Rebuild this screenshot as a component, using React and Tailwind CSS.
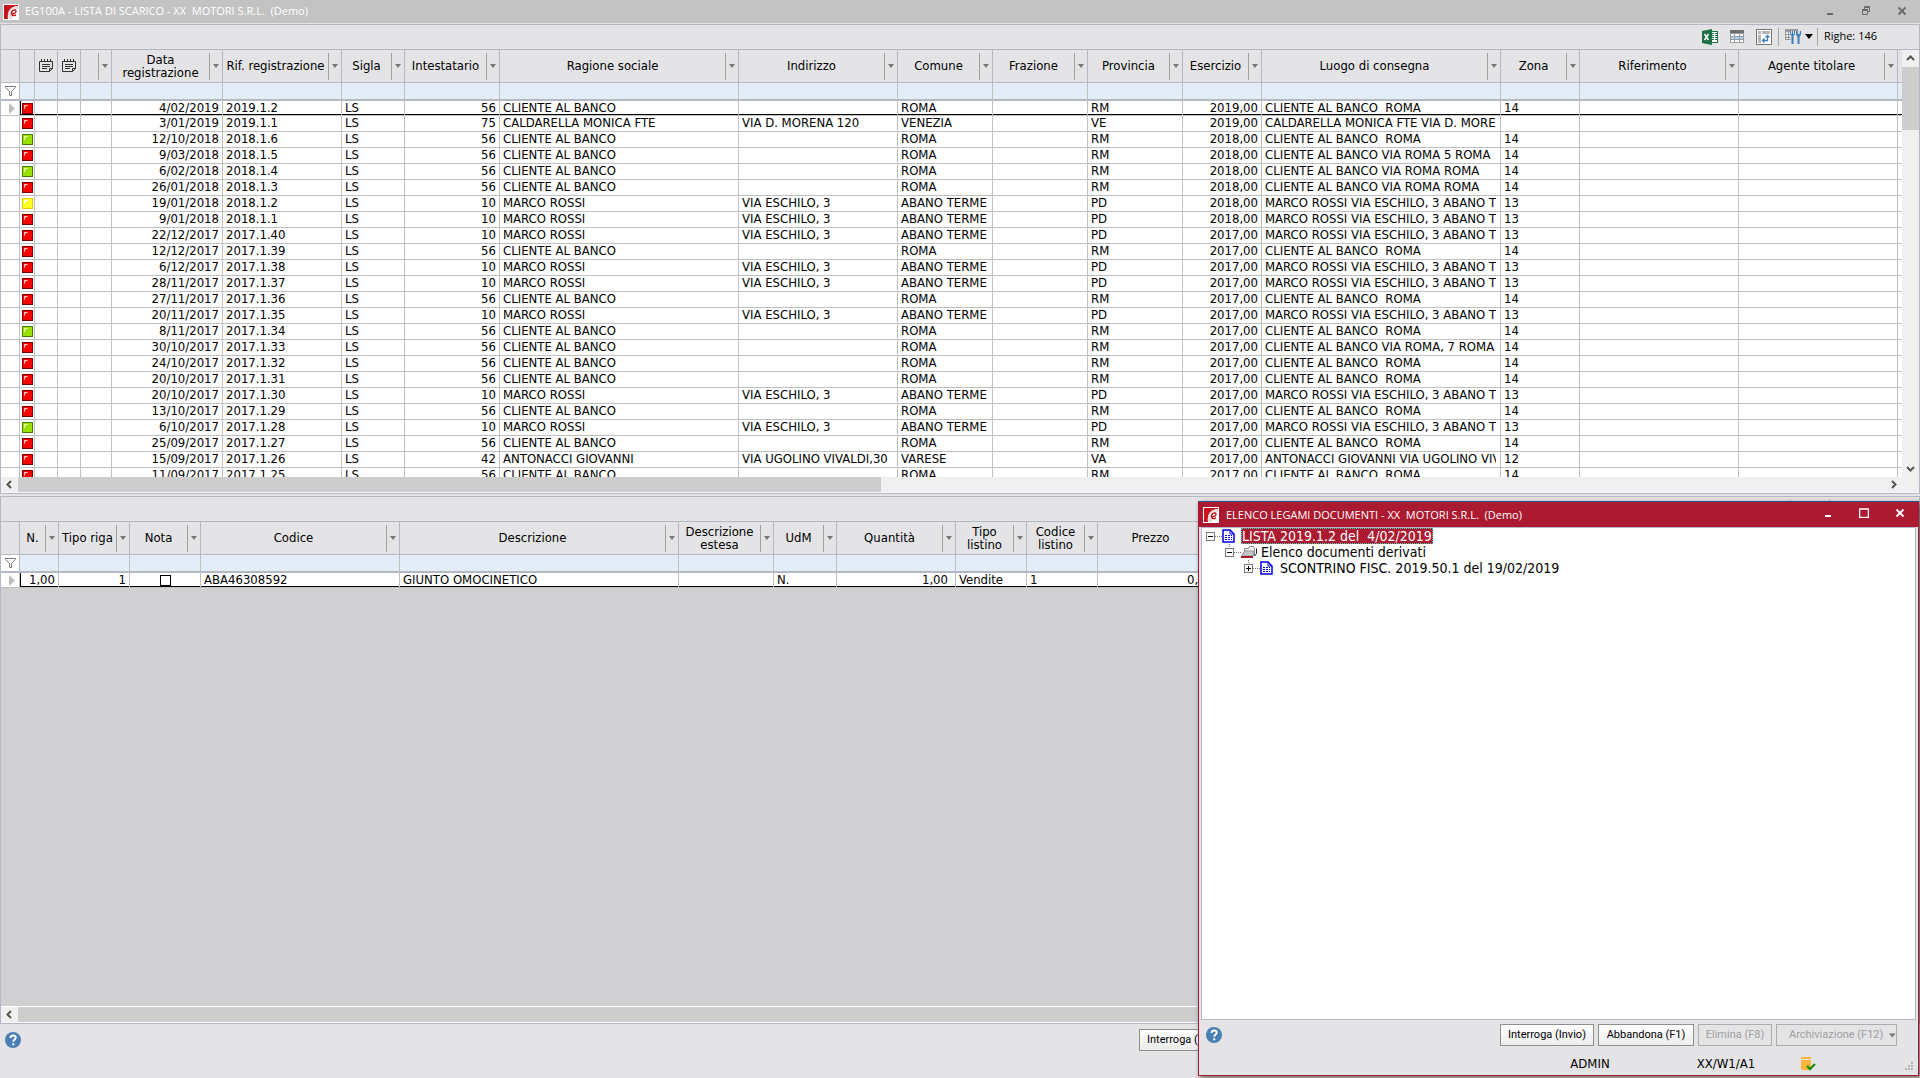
import React from 'react';
import clsx from 'clsx';

const docColumns = [
  { width: 15 },
  { width: 23, icon: true },
  { width: 23, icon: true },
  { width: 31, menu: true },
  { label: 'Data registrazione', width: 111, menu: true, right: true },
  { label: 'Rif. registrazione', width: 119, menu: true },
  { label: 'Sigla', width: 63, menu: true },
  { label: 'Intestatario', width: 95, menu: true, right: true },
  { label: 'Ragione sociale', width: 239, menu: true },
  { label: 'Indirizzo', width: 159, menu: true },
  { label: 'Comune', width: 95, menu: true },
  { label: 'Frazione', width: 95, menu: true },
  { label: 'Provincia', width: 95, menu: true },
  { label: 'Esercizio', width: 79, menu: true, right: true },
  { label: 'Luogo di consegna', width: 239, menu: true },
  { label: 'Zona', width: 79, menu: true },
  { label: 'Riferimento', width: 159, menu: true },
  { label: 'Agente titolare', width: 159, menu: true },
];

const lineColumns = [
  { label: 'N.', width: 39, menu: true, right: true },
  { label: 'Tipo riga', width: 71, menu: true, right: true },
  { label: 'Nota', width: 71, menu: true },
  { label: 'Codice', width: 199, menu: true },
  { label: 'Descrizione', width: 279, menu: true },
  { label: 'Descrizione estesa', width: 95, menu: true },
  { label: 'UdM', width: 63, menu: true },
  { label: 'Quantità', width: 119, menu: true, right: true, wide: true },
  { label: 'Tipo listino', width: 71, menu: true },
  { label: 'Codice listino', width: 71, menu: true },
  { label: 'Prezzo', width: 119, menu: true, right: true },
];

const customers = {
  banco: ['56', 'CLIENTE AL BANCO', '', 'ROMA', 'RM', '14', 'CLIENTE AL BANCO  ROMA'],
  rossi: ['10', 'MARCO ROSSI', 'VIA ESCHILO, 3', 'ABANO TERME', 'PD', '13', 'MARCO ROSSI VIA ESCHILO, 3 ABANO TERME'],
  caldarella: ['75', 'CALDARELLA MONICA FTE', 'VIA D. MORENA 120', 'VENEZIA', 'VE', '', 'CALDARELLA MONICA FTE VIA D. MORENA 120'],
  antonacci: ['42', 'ANTONACCI GIOVANNI', 'VIA UGOLINO VIVALDI,30', 'VARESE', 'VA', '12', 'ANTONACCI GIOVANNI VIA UGOLINO VIVALDI,30'],
};

// state, date, reference, customer, delivery place when it is not the default one
const docs = [
  ['red', '4/02/2019', '2019.1.2', 'banco'],
  ['red', '3/01/2019', '2019.1.1', 'caldarella'],
  ['green', '12/10/2018', '2018.1.6', 'banco'],
  ['red', '9/03/2018', '2018.1.5', 'banco', 'CLIENTE AL BANCO VIA ROMA 5 ROMA'],
  ['green', '6/02/2018', '2018.1.4', 'banco', 'CLIENTE AL BANCO VIA ROMA ROMA'],
  ['red', '26/01/2018', '2018.1.3', 'banco', 'CLIENTE AL BANCO VIA ROMA ROMA'],
  ['yellow', '19/01/2018', '2018.1.2', 'rossi'],
  ['red', '9/01/2018', '2018.1.1', 'rossi'],
  ['red', '22/12/2017', '2017.1.40', 'rossi'],
  ['red', '12/12/2017', '2017.1.39', 'banco'],
  ['red', '6/12/2017', '2017.1.38', 'rossi'],
  ['red', '28/11/2017', '2017.1.37', 'rossi'],
  ['red', '27/11/2017', '2017.1.36', 'banco'],
  ['red', '20/11/2017', '2017.1.35', 'rossi'],
  ['green', '8/11/2017', '2017.1.34', 'banco'],
  ['red', '30/10/2017', '2017.1.33', 'banco', 'CLIENTE AL BANCO VIA ROMA, 7 ROMA'],
  ['red', '24/10/2017', '2017.1.32', 'banco'],
  ['red', '20/10/2017', '2017.1.31', 'banco'],
  ['red', '20/10/2017', '2017.1.30', 'rossi'],
  ['red', '13/10/2017', '2017.1.29', 'banco'],
  ['green', '6/10/2017', '2017.1.28', 'rossi'],
  ['red', '25/09/2017', '2017.1.27', 'banco'],
  ['red', '15/09/2017', '2017.1.26', 'antonacci'],
  ['red', '11/09/2017', '2017.1.25', 'banco'],
];

const stateColors = {
  red: ['#ff0000', '#7d0000', '#ffb0b0'],
  green: ['#99e000', '#4b7a00', '#e0ff9a'],
  yellow: ['#ffff1a', '#e3cf00', '#ffffff'],
};

function StateIcon({ state }) {
  const [fill, edge, shine] = stateColors[state];
  return (
    <svg width="11" height="11" viewBox="0 0 11 11" className="mx-auto block" role="img" aria-label={state}>
      <rect x="0.5" y="0.5" width="10" height="10" fill={fill} stroke={edge} />
      <path d="M2 2h4v1H4v1H3v2H2z" fill={shine} />
    </svg>
  );
}

function NoteIcon() {
  return (
    <svg width="14" height="14" viewBox="0 0 14 14" className="mx-auto block" fill="none" stroke="#333">
      <path d="M0.5 2.5h13v7l-3 3h-10z" />
      <path d="M2.5 0v3M5.5 0v3M8.5 0v3M11.5 0v3M3 5.5h8M3 7.5h8M3 9.5h5M10.5 12.5v-3h3" />
    </svg>
  );
}

function FunnelIcon() {
  return (
    <svg width="11" height="10" viewBox="0 0 11 10" className="ml-1 block" fill="none" stroke="#777">
      <path d="M0.5 0.5h10v1l-4 4v4h-2v-4l-4-4z" />
    </svg>
  );
}

function RowMarker() {
  return (
    <svg width="6" height="11" viewBox="0 0 6 11" className="ml-2 block">
      <path d="M0 0l6 5.5L0 11z" fill="#bdbdbd" />
    </svg>
  );
}

function AppLogo() {
  return (
    <svg width="16" height="16" viewBox="0 0 16 16" className="shrink-0">
      <rect width="16" height="16" fill="#fff" />
      <path d="M1 1h14v1C8 2 4 7 5 15H1z" fill="#c4161c" />
      <path d="M15 2C8 2 4 7 5 15h2C6 8 9 4 15 4z" fill="#f3dada" />
      <path d="M15 4C9 4 6 8 7 15h8z" fill="#d9d9d9" />
      <path d="M15 5C10 5 8 9 9 15h6z" fill="#fff" />
      <path d="M8 10c3 0 5.500-1.300 5-3s-3.800-1-4.500 1.500c-.7 2.800 1.500 4 4.500 2.500" fill="none" stroke="#c4161c" strokeWidth="1.400" />
    </svg>
  );
}

function HelpButton({ className }) {
  return (
    <button type="button" aria-label="Aiuto" className={clsx('block size-4 shrink-0', className)}>
      <svg width="16" height="16" viewBox="0 0 16 16">
        <circle cx="8" cy="8" r="8" fill="#4a7fb5" />
        <path d="M5.500 6c0-1.800 1.100-2.600 2.600-2.600s2.600.8 2.600 2.300c0 1.900-2.400 1.900-2.400 4" fill="none" stroke="#fff" strokeWidth="2" />
        <path d="M7.200 11.300h2.100v2H7.200z" fill="#fff" />
      </svg>
    </button>
  );
}

function Toolbar({ count }) {
  return (
    <div className="flex h-[25px] shrink-0 items-center justify-end border-b border-[#b4b8c4] pr-[42px] pb-px">
      <button type="button" aria-label="Esporta in Excel">
        <svg width="16" height="16" viewBox="0 0 16 16" className="block">
          <rect x="8.500" y="2.500" width="7" height="11" fill="#fff" stroke="#1f7145" />
          <path d="M10 4.500h2M13 4.500h2M10 6.500h2M13 6.500h2M10 8.500h2M13 8.500h2M10 10.500h2M13 10.500h2" stroke="#1f7145" />
          <path d="M0 2l10-2v16L0 14z" fill="#1f7145" />
          <path d="M2.500 5l4 6M6.500 5l-4 6" stroke="#fff" strokeWidth="1.500" />
        </svg>
      </button>
      <button type="button" aria-label="Griglia" className="ml-3">
        <svg width="14" height="14" viewBox="0 0 14 14" className="block">
          <rect width="14" height="13" fill="#9c9c9c" />
          <rect width="14" height="3" fill="#6e6e6e" />
          <path d="M1 4h3v2H1zM5 4h4v2H5zM10 4h3v2h-3zM1 10h3v2H1zM5 10h4v2H5zM10 10h3v2h-3z" fill="#fff" />
          <path d="M1 7h3v2H1zM5 7h4v2H5zM10 7h3v2h-3z" fill="#a9d4f2" />
        </svg>
      </button>
      <button type="button" aria-label="Pivot" className="ml-3">
        <svg width="16" height="16" viewBox="0 0 16 16" className="block">
          <rect x="0.500" y="0.500" width="15" height="15" fill="#fff" stroke="#777" />
          <path d="M2 2h3v3H2zM6 2h8v3H6zM2 6h3v8H2z" fill="#b5b5b5" />
          <path d="M11.500 7v4.500H7M9.500 8.500l2-2 2 2M8.500 9.500l-2 2 2 2" fill="none" stroke="#3d7dbb" strokeWidth="1.300" />
        </svg>
      </button>
      <span className="ml-1.5 h-[18px] w-px bg-[#a8a8a8]" />
      <button type="button" aria-label="Impostazioni griglia" className="ml-1.5 flex items-center gap-1">
        <svg width="16" height="15" viewBox="0 0 16 15" className="block">
          <path d="M0 0h13v11H0z" fill="#9b9b9b" />
          <path d="M1 3h2v2H1zM4 3h2v2H4zM1 6h2v2H1zM4 6h2v2H4zM1 9h2v1H1zM4 9h2v1H4z" fill="#e8e8e8" />
          <path d="M5 2h7v3h4v3h-3v7H6z" fill="#e4e4e6" />
          <path d="M5 2v3l1.500 2v8h2V7L10 5V2H9v3H8V2H7v3H6V2zM11 2v3.500L12.500 8v7h2V8L16 5.500V2h-1.200v3h-2.600V2z" fill="#3d7dbb" />
        </svg>
        <svg width="8" height="5" viewBox="0 0 8 5" className="block">
          <path d="M0 0h8L4 5z" fill="#000" />
        </svg>
      </button>
      <span className="ml-1 h-[18px] w-px bg-[#a8a8a8]" />
      <span className="ml-1.5 font-['Open_Sans',sans-serif] text-[11px]">Righe: {count}</span>
    </div>
  );
}

function GridHead({ columns }) {
  return (
    <thead>
      <tr className="bg-[#e4e4e6]">
        <th className="h-[33px] border-r border-b border-[#b4b8c4] p-0" />
        {columns.map((col, i) => (
          <th key={i} className="h-[33px] border-r border-b border-[#b4b8c4] p-0 font-normal">
            <div className="flex h-8 items-center">
              <span className="min-w-0 flex-1 pb-px text-center leading-[13px]">
                {col.icon ? <NoteIcon /> : col.label}
              </span>
              {col.menu && (
                <button
                  type="button"
                  aria-label={`Menu ${col.label || 'colonna'}`}
                  className="flex h-[27px] w-[13px] shrink-0 items-center justify-center border-l border-[#a0a0a0]"
                >
                  <svg width="6" height="4" viewBox="0 0 6 4">
                    <path d="M0 0h6L3 4z" fill="#777" />
                  </svg>
                </button>
              )}
            </div>
          </th>
        ))}
        <th className="border-b border-[#b4b8c4] p-0" />
      </tr>
      <tr className="bg-[#e3edf7]">
        <td className="h-[18px] border-r border-b-2 border-[#b4b8c4] bg-white p-0">
          <FunnelIcon />
        </td>
        {columns.map((col, i) => (
          <td key={i} className="h-[18px] border-r border-b-2 border-r-[#c0c0c0] border-b-[#b4b8c4] p-0">
            <input
              type="text"
              aria-label={`Filtro ${col.label || 'colonna'}`}
              className="block h-4 w-full bg-transparent px-[3px] outline-none"
            />
          </td>
        ))}
        <td className="border-b-2 border-[#b4b8c4] p-0" />
      </tr>
    </thead>
  );
}

function Grid({ columns, rows }) {
  return (
    <table className="w-full table-fixed border-separate border-spacing-0 leading-[13px]">
      <colgroup>
        <col style={{ width: 19 }} />
        {columns.map((col, i) => (
          <col key={i} style={{ width: col.width }} />
        ))}
        <col />
      </colgroup>
      <GridHead columns={columns} />
      <tbody className="bg-white">
        {rows.map((cells, r) => {
          const active = r === 0;
          const line = active ? 'shadow-[inset_0_-1px_0_#000]' : '';
          return (
            <tr key={r}>
              <td className={clsx('border-r border-b border-[#c0c0c0] p-0', active ? 'h-[15px]' : 'h-4')}>
                {active && <RowMarker />}
              </td>
              {cells.map((cell, i) => (
                <td
                  key={i}
                  className={clsx(
                    'border-r border-b border-[#c0c0c0] p-0',
                    active && i === 0 ? 'shadow-[inset_1px_-1px_0_#000]' : line,
                  )}
                >
                  <div
                    className={clsx(
                      'overflow-hidden whitespace-pre',
                      active ? 'h-3.5' : 'h-[15px]',
                      typeof cell !== 'string' && 'flex items-center',
                      typeof cell === 'string' && (columns[i].right ? 'text-right' : 'mr-1 ml-[3px]'),
                      columns[i].right && (columns[i].wide ? 'mr-[7px]' : 'mr-[3px]'),
                    )}
                  >
                    {cell}
                  </div>
                </td>
              ))}
              <td className={clsx('border-b border-[#c0c0c0] p-0', line)} />
            </tr>
          );
        })}
      </tbody>
    </table>
  );
}

function Chevron({ d }) {
  return (
    <svg width="9" height="9" viewBox="0 0 9 9" fill="none" stroke="#555" strokeWidth="2">
      <path d={d} />
    </svg>
  );
}

function HScroll({ thumb }) {
  return (
    <div className="flex h-4 shrink-0 items-stretch border-b border-[#f8f8f8] bg-[#f0f0f0]">
      <button type="button" aria-label="Scorri a sinistra" className="flex w-[17px] items-center justify-center">
        <Chevron d="M6 1L2.500 4.500 6 8" />
      </button>
      <div className="flex flex-1">
        <div className={clsx('bg-[#cdcdcd]', thumb)} />
      </div>
      <button type="button" aria-label="Scorri a destra" className="mr-[17px] flex w-[17px] items-center justify-center">
        <Chevron d="M3 1l3.500 3.500L3 8" />
      </button>
    </div>
  );
}

function VScroll() {
  return (
    <div className="flex w-[17px] shrink-0 flex-col bg-[#f0f0f0]">
      <button type="button" aria-label="Scorri in alto" className="flex h-[17px] items-center justify-center">
        <Chevron d="M1 6l3.500-3.500L8 6" />
      </button>
      <div className="flex-1">
        <div className="h-[63px] bg-[#cdcdcd]" />
      </div>
      <button type="button" aria-label="Scorri in basso" className="flex h-[17px] items-center justify-center">
        <Chevron d="M1 3l3.500 3.500L8 3" />
      </button>
    </div>
  );
}

function WindowButtons({ restore, className }) {
  return (
    <div className={clsx('ml-auto flex items-center gap-5 pr-2.5', className)}>
      <button type="button" aria-label="Riduci a icona" className="flex w-4 justify-center">
        <svg width="10" height="10" viewBox="0 0 10 10">
          <path d="M2 7h6v2H2z" fill="currentColor" />
        </svg>
      </button>
      <button type="button" aria-label={restore ? 'Ripristina' : 'Ingrandisci'} className="flex w-4 justify-center">
        <svg width="10" height="10" viewBox="0 0 10 10" fill="none" stroke="currentColor">
          {restore ? <path d="M1.500 4.500h5v4h-5zM1 3.500h6M3.500 3V.5h5v5H7M3 1.500h6" /> : <path d="M0.500 1v8.500h9V1M0 1h10" strokeWidth="1.500" />}
        </svg>
      </button>
      <button type="button" aria-label="Chiudi" className="flex w-4 justify-center">
        <svg width="10" height="10" viewBox="0 0 10 10" stroke="currentColor" strokeWidth="1.800">
          <path d="M1.500 1.500l7 7M8.500 1.500l-7 7" />
        </svg>
      </button>
    </div>
  );
}

function FormButton({ children, className, disabled }) {
  return (
    <button
      type="button"
      disabled={disabled}
      className={clsx(
        "flex h-[22px] items-center justify-center border pt-px font-['Roboto',sans-serif] text-[11px] whitespace-nowrap",
        disabled ? 'border-[#adadad] text-[#a0a0a0]' : 'border-[#8f8f8f] bg-linear-to-b from-white to-[#ececee] text-black',
        className,
      )}
    >
      {children}
    </button>
  );
}

function DocIcon() {
  return (
    <svg width="13" height="14" viewBox="0 0 13 14" className="block">
      <path d="M1 1h7l4 4v8H1z" fill="#fff" stroke="#0000e6" strokeWidth="1.500" />
      <path d="M8 1v4h4" fill="none" stroke="#0000e6" />
      <path d="M3 6.500h7M3 8.500h7M3 10.500h7" stroke="#0000e6" strokeDasharray="2 1" />
    </svg>
  );
}

function FolderIcon() {
  return (
    <svg width="16" height="13" viewBox="0 0 16 13" className="block">
      <path d="M3.500 5V2.500h4l1-2h4l1 2v7h-3" fill="#ececec" stroke="#8a8a8a" />
      <path d="M13.500 10l2-2.500v-5" fill="none" stroke="#222" />
      <path d="M0.500 10l3-5h9v5z" fill="#c4c4c4" stroke="#9a9a9a" />
      <path d="M0 10h12v2H0z" fill="#a81a30" />
    </svg>
  );
}

function TreeRow({ indent, open, root, icon, selected, children }) {
  return (
    <li className={clsx('flex h-4 items-center', indent)}>
      <button type="button" aria-label={open ? 'Comprimi' : 'Espandi'} className="block size-4">
        <svg width="16" height="16" viewBox="0 0 16 16" fill="none">
          {!root && <path d="M4.500 0v4" stroke="#777" strokeDasharray="1 1" />}
          <path d="M9 8.500h7" stroke="#777" strokeDasharray="1 1" />
          <rect x="0.500" y="4.500" width="8" height="8" fill="#fff" stroke="#777" />
          <path d={open ? 'M2 8.500h5' : 'M2 8.500h5M4.500 6v5'} stroke="#000" />
        </svg>
      </button>
      <span className="w-4">{icon}</span>
      <span
        className={clsx(
          'ml-[3px] h-4 px-px text-[14px] leading-4 whitespace-pre',
          selected && 'bg-[#ab1a30] text-white outline outline-dotted -outline-offset-1 outline-[#3fd0b8]',
        )}
      >
        {children}
      </span>
    </li>
  );
}

function LinksDialog() {
  return (
    <section
      role="dialog"
      aria-label="Elenco legami documenti"
      className="absolute right-px bottom-0.5 flex h-[575px] w-[721px] flex-col border border-[#ab1a30] border-t-[#1f5a8c] bg-[#e4e4e6] shadow-[2px_2px_5px_rgba(0,0,0,0.6)]"
    >
      <header className="flex h-[25px] shrink-0 items-center bg-[#ab1a30] pl-1 text-white">
        <AppLogo />
        <h2 className="ml-[7px] pt-0.5 font-['Open_Sans',sans-serif] text-[11px] whitespace-pre">
          {'ELENCO LEGAMI DOCUMENTI - XX  MOTORI S.R.L.  (Demo)'}
        </h2>
        <WindowButtons className="pb-[3px]" />
      </header>
      <ul className="mr-0.5 ml-0.5 flex-1 border border-[#b4b8c4] bg-white">
        <TreeRow indent="pl-1" open root selected icon={<DocIcon />}>
          {'LISTA 2019.1.2 del  4/02/2019'}
        </TreeRow>
        <TreeRow indent="pl-[23px]" open icon={<FolderIcon />}>
          Elenco documenti derivati
        </TreeRow>
        <TreeRow indent="pl-[42px]" icon={<DocIcon />}>
          SCONTRINO FISC. 2019.50.1 del 19/02/2019
        </TreeRow>
      </ul>
      <div className="flex items-center gap-1 pt-1 pr-[21px] pl-[7px]">
        <HelpButton />
        <FormButton className="ml-auto w-[94px]">Interroga (Invio)</FormButton>
        <FormButton className="w-24">Abbandona (F1)</FormButton>
        <FormButton className="w-[74px]" disabled>Elimina (F8)</FormButton>
        <FormButton className="w-[121px] gap-1.5 pl-3" disabled>
          Archiviazione (F12)
          <svg width="8" height="5" viewBox="0 0 8 5">
            <path d="M0 0h8L4 5z" fill="#777" />
          </svg>
        </FormButton>
      </div>
      <footer className="flex h-[29px] items-center justify-end pt-1.5 pr-1">
        <span className="w-[120px] text-center">ADMIN</span>
        <span className="ml-4 w-[120px] text-center">XX/W1/A1</span>
        <svg width="15" height="15" viewBox="0 0 15 15" className="ml-[15px]">
          <path d="M1 1h9v2H0V2zM0 4h10v10H1l-1-1z" fill="#ffb43c" />
          <path d="M6 10l3 3 5-5" fill="none" stroke="#0a8a0a" strokeWidth="2" />
        </svg>
        <svg width="9" height="9" viewBox="0 0 9 9" className="mb-1 ml-[89px] self-end">
          <path d="M6 0h2v2H6zM3 3h2v2H3zM6 3h2v2H6zM0 6h2v2H0zM3 6h2v2H3zM6 6h2v2H6z" fill="#b4b4b4" />
        </svg>
      </footer>
    </section>
  );
}

export default function App() {
  const docRows = docs.map(([state, date, ref, key, place]) => {
    const [code, name, address, city, province, zone, delivery] = customers[key];
    return [
      <StateIcon state={state} />, '', '', '', date, ref, 'LS', code, name, address, city, '',
      province, `${date.slice(-4)},00`, place || delivery, zone, '', '',
    ];
  });

  const lineRows = [
    [
      '1,00',
      '1',
      <input type="checkbox" aria-label="Nota" className="mx-auto block size-[11px] appearance-none border border-black bg-white" />,
      'ABA46308592', 'GIUNTO OMOCINETICO', '', 'N.', '1,00', 'Vendite', '1', '0,00',
    ],
  ];

  return (
    <div className="relative flex h-screen flex-col overflow-hidden bg-[#e4e4e6] font-['DejaVu_Sans_Condensed','DejaVu_Sans',sans-serif] text-[13px] text-black">
      <header className="mb-px flex h-[23px] shrink-0 items-center bg-[#c3c3c3] pl-[3px]">
        <AppLogo />
        <h1 className="ml-1.5 font-['Open_Sans',sans-serif] text-[11px] whitespace-pre text-white">
          {'EG100A - LISTA DI SCARICO - XX  MOTORI S.R.L.  (Demo)'}
        </h1>
        <WindowButtons restore className="pb-px text-[#6a6a6a]" />
      </header>

      <section className="flex shrink-0 flex-col border border-[#b4b8c4]">
        <Toolbar count={146} />
        <div className="flex h-[427px]">
          <div className="min-w-0 flex-1 overflow-hidden bg-white">
            <Grid columns={docColumns} rows={docRows} />
          </div>
          <VScroll />
        </div>
        <HScroll thumb="w-[46.2%]" />
      </section>

      <section className="mt-0.5 flex min-h-0 flex-1 flex-col border border-[#b4b8c4]">
        <Toolbar count={1} />
        <div className="min-h-0 flex-1 overflow-hidden border-b border-white bg-[#d0d0d2]">
          <Grid columns={lineColumns} rows={lineRows} />
        </div>
        <HScroll thumb="w-4/5" />
      </section>

      <footer className="flex h-[54px] shrink-0 items-start pt-[5px] pl-[5px]">
        <HelpButton className="mt-[3px]" />
        <div className="ml-auto flex gap-1 pr-96">
          <FormButton className="w-[94px]">Interroga (Invio)</FormButton>
          <FormButton className="w-24">Abbandona (F1)</FormButton>
          <FormButton className="w-[74px]">Elimina (F8)</FormButton>
          <FormButton className="w-[121px]">Archiviazione (F12)</FormButton>
        </div>
      </footer>

      <LinksDialog />
    </div>
  );
}
